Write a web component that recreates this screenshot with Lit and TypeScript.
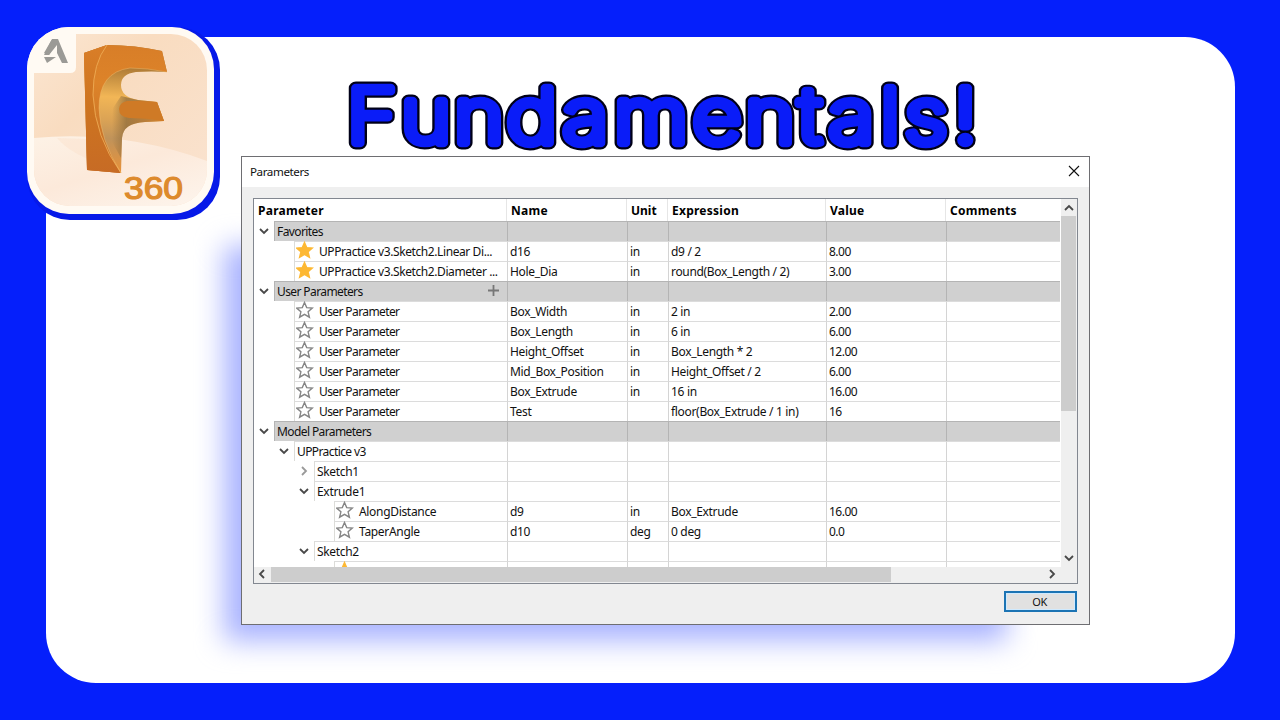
import { LitElement, html, css, svg, nothing } from 'lit';
import { customElement, property } from 'lit/decorators.js';
import { classMap } from 'lit/directives/class-map.js';

interface Row {
  kind: 'group' | 'folder' | 'param';
  label: string;
  level: number;
  open?: boolean;
  favorite?: boolean;
  addable?: boolean;
  cells?: string[];
}

const userParam = (...cells: string[]): Row => ({
  kind: 'param', label: 'User Parameter', level: 1, cells,
});

const ROWS: Row[] = [
  { kind: 'group', label: 'Favorites', level: 0, open: true },
  { kind: 'param', label: 'UPPractice v3.Sketch2.Linear Di...', level: 1, favorite: true, cells: ['d16', 'in', 'd9 / 2', '8.00'] },
  { kind: 'param', label: 'UPPractice v3.Sketch2.Diameter ...', level: 1, favorite: true, cells: ['Hole_Dia', 'in', 'round(Box_Length / 2)', '3.00'] },
  { kind: 'group', label: 'User Parameters', level: 0, open: true, addable: true },
  userParam('Box_Width', 'in', '2 in', '2.00'),
  userParam('Box_Length', 'in', '6 in', '6.00'),
  userParam('Height_Offset', 'in', 'Box_Length * 2', '12.00'),
  userParam('Mid_Box_Position', 'in', 'Height_Offset / 2', '6.00'),
  userParam('Box_Extrude', 'in', '16 in', '16.00'),
  userParam('Test', '', 'floor(Box_Extrude / 1 in)', '16'),
  { kind: 'group', label: 'Model Parameters', level: 0, open: true },
  { kind: 'folder', label: 'UPPractice v3', level: 1, open: true },
  { kind: 'folder', label: 'Sketch1', level: 2 },
  { kind: 'folder', label: 'Extrude1', level: 2, open: true },
  { kind: 'param', label: 'AlongDistance', level: 3, cells: ['d9', 'in', 'Box_Extrude', '16.00'] },
  { kind: 'param', label: 'TaperAngle', level: 3, cells: ['d10', 'deg', '0 deg', '0.0'] },
  { kind: 'folder', label: 'Sketch2', level: 2, open: true },
  { kind: 'param', label: '', level: 3, favorite: true },
];

const CHEVRONS = {
  down: 'M1 3l4 4 4-4',
  up: 'M1 7l4-4 4 4',
  left: 'M7 1L3 5l4 4',
  right: 'M3 1l4 4-4 4',
};

@customElement('ui-chevron')
export class UiChevron extends LitElement {
  @property() dir: keyof typeof CHEVRONS = 'down';

  static styles = css`
    :host {
      display: block;
      width: 10px;
      height: 10px;
      color: #484848;
    }

    svg {
      display: block;
    }
  `;

  render() {
    return html`
      <svg width="10" height="10" viewBox="0 0 10 10">
        <path d=${CHEVRONS[this.dir]} fill="none" stroke="currentColor" stroke-width="1.8" />
      </svg>
    `;
  }
}

@customElement('param-row')
export class ParamRow extends LitElement {
  @property({ attribute: false }) row!: Row;

  static styles = css`
    :host {
      display: flex;
      height: 20px;
      font-size: 12px;
      line-height: 20px;
      color: #111;
    }

    .tree {
      display: flex;
      flex: none;
      width: 253px;
    }

    .toggle {
      width: 20px;
      flex: none;
      display: flex;
      justify-content: center;
      box-sizing: border-box;
      padding: 5px 1px 0 0;
    }

    .toggle.closed ui-chevron {
      color: #999;
    }

    .name {
      flex: 1;
      display: flex;
      box-sizing: border-box;
      min-width: 0;
      border-left: 1px solid #dcdcd8;
      border-top: 1px solid #dcdcdc;
      padding-left: 2px;
      letter-spacing: -0.32px;
      white-space: nowrap;
    }

    .tight .name {
      letter-spacing: -0.6px;
    }

    .favorite .name {
      letter-spacing: -0.41px;
    }

    .name svg {
      flex: none;
      display: block;
    }

    .star {
      margin: -1px 5px 0 -1px;
    }

    .plus {
      margin: 3px 8px 0 auto;
    }

    .cell {
      box-sizing: border-box;
      flex: none;
      border-left: 1px solid #d4d4d4;
      border-top: 1px solid #dcdcdc;
      padding-left: 2px;
      letter-spacing: -0.32px;
      white-space: nowrap;
    }

    .c0 { width: 120px; }
    .c1 { width: 41px; }
    .c2 { width: 158px; }
    .c3 { width: 120px; letter-spacing: -0.5px; }
    .c4 { width: 114px; }

    .group .name,
    .group.cell {
      background: #d0d0d0;
      border-color: #b4b4b4;
    }
  `;

  render() {
    const { kind, label, level, open, favorite, addable, cells = [] } = this.row;
    const group = kind === 'group';
    const tight = level < 2 && !favorite;
    return html`
      <div class=${classMap({ tree: true, group, tight, favorite: !!favorite })}>
        ${Array.from({ length: level }, () => html`<div class="toggle"></div>`)}
        <div class=${classMap({ toggle: true, closed: !open })}>
          ${kind === 'param' ? nothing : html`<ui-chevron dir=${open ? 'down' : 'right'}></ui-chevron>`}
        </div>
        <div class="name">
          ${kind === 'param' ? this.star(!!favorite) : nothing}
          <span>${label}</span>
          ${addable ? html`
            <svg class="plus" width="11" height="11" viewBox="0 0 11 11">
              <path d="M5.5 0v11M0 5.5h11" stroke="#777" stroke-width="1.8" />
            </svg>` : nothing}
        </div>
      </div>
      ${[0, 1, 2, 3, 4].map((i) => html`
        <div class=${classMap({ cell: true, group, [`c${i}`]: true })}>${cells[i] ?? ''}</div>
      `)}
    `;
  }

  private star(filled: boolean) {
    return html`
      <svg class="star" width="18" height="19" viewBox="0 0 18 19">
        <path d="M8.500 1.500l2.200 5.100 5.600.5-4.200 3.700 1.300 5.400-4.900-2.900-4.900 2.900 1.300-5.400L.7 7.100l5.600-.5z"
          fill=${filled ? '#fdb833' : '#fff'} stroke=${filled ? '#fdb833' : '#858585'} stroke-width="1.4" />
      </svg>
    `;
  }
}

@customElement('parameters-dialog')
export class ParametersDialog extends LitElement {
  static styles = css`
    :host {
      display: flex;
      flex-direction: column;
      box-sizing: border-box;
      width: 849px;
      height: 469px;
      background: #efefef;
      border: 1px solid #6e6e72;
      font-family: 'Noto Sans', sans-serif;
      color: #111;
    }

    .titlebar {
      display: flex;
      justify-content: space-between;
      align-items: center;
      box-sizing: border-box;
      height: 30px;
      padding: 0 9px 2px 8px;
      background: #fff;
      font-size: 11.6px;
      letter-spacing: -0.4px;
    }

    .table {
      display: grid;
      grid-template: 368px 16px / 807px 16px;
      width: 823px;
      height: 384px;
      margin: 11px 0 0 11px;
      border: 1px solid #828790;
    }

    .view {
      overflow: hidden;
      background: #fff;
    }

    .head {
      display: flex;
      height: 22px;
      line-height: 23px;
      font-size: 12px;
      font-weight: 700;
      letter-spacing: 0.25px;
      color: #000;
    }

    .head div {
      box-sizing: border-box;
      flex: none;
      border-left: 1px solid #e6e6e6;
      padding-left: 4px;
    }

    .head div:first-child {
      border-left-color: transparent;
      padding-left: 3px;
    }

    .h0 { width: 252px; }
    .h1 { width: 120px; }
    .h2 { width: 41px; letter-spacing: 0; }
    .h3 { width: 158px; }
    .h4 { width: 120px; }
    .h5 { width: 115px; }

    .vbar,
    .hbar {
      display: flex;
      align-items: center;
      justify-content: space-between;
    }

    .vbar {
      flex-direction: column;
      padding: 4px 1px 4px 0;
    }

    .hbar {
      padding: 0 4px 2px 3px;
    }

    .vthumb {
      width: 15px;
      height: 195px;
      margin: 3px 0 auto;
      background: #cdcdcd;
    }

    .hthumb {
      width: 620px;
      height: 15px;
      margin: 0 auto 0 4px;
      background: #cdcdcd;
    }

    .footer {
      display: flex;
      justify-content: flex-end;
      padding: 7px 12px 0 0;
    }

    button {
      width: 73px;
      height: 21px;
      padding: 0 2px 0 0;
      border: 2px solid #1c74b4;
      box-shadow: inset 0 0 0 1px #cfeaff;
      background: #e1e1e1;
      font: 11px/17px 'Noto Sans', sans-serif;
      letter-spacing: -0.4px;
      color: #111;
    }
  `;

  render() {
    return html`
      <div class="titlebar">
        <span>Parameters</span>
        <svg width="12" height="12" viewBox="0 0 12 12">
          <path d="M1 1l10 10M11 1L1 11" stroke="#111" stroke-width="1.1" />
        </svg>
      </div>
      <div class="table">
        <div class="view">
          <div class="head">
            ${['Parameter', 'Name', 'Unit', 'Expression', 'Value', 'Comments'].map(
              (title, i) => html`<div class="h${i}">${title}</div>`,
            )}
          </div>
          ${ROWS.map((row) => html`<param-row .row=${row}></param-row>`)}
        </div>
        <div class="vbar">
          <ui-chevron dir="up"></ui-chevron>
          <div class="vthumb"></div>
          <ui-chevron dir="down"></ui-chevron>
        </div>
        <div class="hbar">
          <ui-chevron dir="left"></ui-chevron>
          <div class="hthumb"></div>
          <ui-chevron dir="right"></ui-chevron>
        </div>
      </div>
      <div class="footer"><button>OK</button></div>
    `;
  }
}

@customElement('fusion-logo')
export class FusionLogo extends LitElement {
  static styles = css`
    :host {
      display: block;
      width: 194px;
      height: 194px;
    }

    svg {
      display: block;
    }

    text {
      font: 31px 'Liberation Sans', sans-serif;
      fill: #dd8a2c;
      stroke: #dd8a2c;
      stroke-width: 1.2px;
    }
  `;

  render() {
    return html`
      <svg width="194" height="194" viewBox="27 27 194 194">
        <defs>
          <linearGradient id="wall" x1="0" y1="0" x2="1" y2="1">
            <stop offset="0" stop-color="#fbe6d2" />
            <stop offset="0.35" stop-color="#f9dcc0" />
            <stop offset="1" stop-color="#fae3d0" />
          </linearGradient>
          <linearGradient id="floor" x1="0" y1="0" x2="0.8" y2="1">
            <stop offset="0" stop-color="#fdf2e6" />
            <stop offset="0.5" stop-color="#fce9da" />
            <stop offset="1" stop-color="#fdf3ea" />
          </linearGradient>
          <linearGradient id="side" x1="0" y1="0" x2="0" y2="1">
            <stop offset="0" stop-color="#d97e28" />
            <stop offset="0.5" stop-color="#cd7420" />
            <stop offset="1" stop-color="#c76b25" />
          </linearGradient>
          <linearGradient id="face" x1="0" y1="0" x2="0" y2="1">
            <stop offset="0" stop-color="#d87e28" />
            <stop offset="0.3" stop-color="#dd8329" />
            <stop offset="1" stop-color="#bd6a28" />
          </linearGradient>
          <linearGradient id="curve" gradientUnits="userSpaceOnUse" x1="118" y1="68" x2="112" y2="172">
            <stop offset="0" stop-color="#b07c36" />
            <stop offset="0.28" stop-color="#f2b656" />
            <stop offset="0.5" stop-color="#dba355" />
            <stop offset="0.68" stop-color="#c0935a" />
            <stop offset="1" stop-color="#e8923a" />
          </linearGradient>
          <linearGradient id="arm" gradientUnits="userSpaceOnUse" x1="112" y1="0" x2="160" y2="0">
            <stop offset="0" stop-color="#8f6c3c" stop-opacity="0" />
            <stop offset="0.3" stop-color="#8f6c3c" stop-opacity="0.75" />
            <stop offset="1" stop-color="#d28330" />
          </linearGradient>
          <clipPath id="inner">
            <rect x="34" y="34" width="173" height="172" rx="36" />
          </clipPath>
          <clipPath id="plate">
            <rect x="27" y="27" width="187" height="187" rx="42" />
          </clipPath>
        </defs>
        <rect x="27" y="27" width="193" height="193" rx="43" fill="#0619e8" />
        <rect x="27" y="27" width="187" height="187" rx="42" fill="#fffaf3" />
        <g clip-path="url(#inner)">
          <rect x="34" y="34" width="173" height="172" fill="url(#wall)" />
          <path d="M34 138q90-8 173 23v46H34z" fill="url(#floor)" />
          <path d="M57 138q15 18 50 27l-20-26z" fill="#f9dfc8" opacity="0.4" />
        </g>
        <path d="M27 27h49v40q0 6-6 6H27z" fill="#fffaf3" clip-path="url(#plate)" />
        ${this.badge()}
        ${this.letter()}
        <text x="124" y="199" textLength="59" lengthAdjust="spacingAndGlyphs">360</text>
      </svg>
    `;
  }

  private badge() {
    return svg`
      <g fill="#9b9a96">
        <path d="M52 39h6l10 24h-6l-5-10v-8l-8 10h-5z" />
        <path d="M51.500 40L44 53l5 2 6-10z" />
        <path d="M44 57h12l-9 6z" />
      </g>
    `;
  }

  private letter() {
    return svg`
      <path d="M107 45q28 0 55 6l5 21q-16-1-31 0-15 2-15 13 0 12 17 15l19 2 7 19-19 1q-22 1-23 16l-1 35-34-3-3-117z" fill="url(#curve)" />
      <path d="M138 100l19 2 7 19-19 1q-22 1-23 16l-1 20-11-20 3-30 8-12z" fill="url(#arm)" />
      <path d="M107 45q28 0 55 6l5 21q-20-4-37-4-31 4-31 40 1 32 22 65l-34-3-3-117z" fill="url(#face)" />
      <path d="M84 53l23-8q-14 18-14 50 2 42 28 78l-34-3z" fill="url(#side)" />
      <path d="M107 45q-14 18-14 50 2 42 28 78" fill="none" stroke="#edaa54" stroke-width="0.9" />
      <path d="M167 72q-20-4-37-4-31 4-31 40 1 32 22 65" fill="none" stroke="#f0b868" stroke-width="0.7" opacity="0.7" />
      <path d="M127 101h12l18 1 7 19q-17-3-35-3-10-1-10-9 1-7 8-8z" fill="#cf7a26" />
    `;
  }
}

const TITLE = 'Fundamentals!';
const TITLE_STRETCH = 1.12;
// start of every letter, given before the stretch is applied
const TITLE_X = [347, 401, 454, 506.5, 562.5, 614, 692.5, 745, 798.5, 828.5, 880.5, 904.5, 953.5]
  .map((x) => (x / TITLE_STRETCH).toFixed(2))
  .join(' ');

@customElement('app-root')
export class AppRoot extends LitElement {
  static styles = css`
    :host {
      display: block;
      position: relative;
      width: 1280px;
      height: 720px;
      overflow: hidden;
      background: #051ffb;
    }

    .card {
      position: absolute;
      left: 46px;
      top: 37px;
      width: 1189px;
      height: 646px;
      border-radius: 50px;
      background: #fff;
    }

    fusion-logo {
      position: absolute;
      left: 27px;
      top: 27px;
    }

    .title {
      position: absolute;
      left: 330px;
      top: 50px;
    }

    .title text {
      font: 200 76px Inter, 'Liberation Sans', sans-serif;
      stroke-linejoin: round;
      stroke-linecap: round;
    }

    .outline {
      fill: #000018;
      stroke: #000018;
      stroke-width: 12.8px;
    }

    .fill {
      fill: #0a1cf8;
      stroke: #0a1cf8;
      stroke-width: 8.6px;
    }

    .glow {
      position: absolute;
      left: 224px;
      top: 246px;
      width: 783px;
      height: 395px;
      background: #a9b3ff;
      filter: blur(14px);
    }

    parameters-dialog {
      position: absolute;
      left: 241px;
      top: 156px;
    }
  `;

  render() {
    return html`
      <div class="card"></div>
      <div class="glow"></div>
      <fusion-logo></fusion-logo>
      <svg class="title" width="670" height="130" viewBox="330 50 670 130">
        <g transform="scale(${TITLE_STRETCH} 1)">
          <text class="outline" x=${TITLE_X} y="143" aria-hidden="true">${TITLE}</text>
          <text class="fill" x=${TITLE_X} y="143">${TITLE}</text>
        </g>
      </svg>
      <parameters-dialog></parameters-dialog>
    `;
  }
}
